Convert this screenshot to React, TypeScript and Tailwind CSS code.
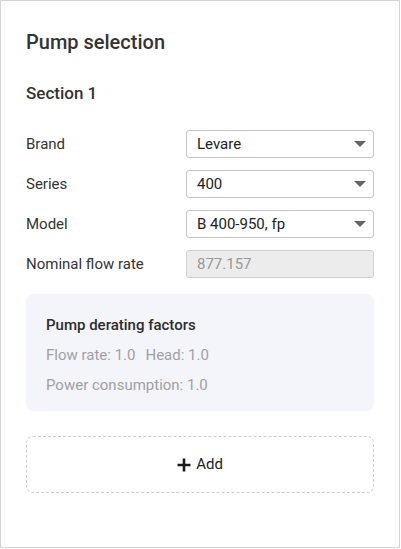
import React from 'react';

const fields = [
  { label: 'Brand', value: 'Levare', kind: 'select' },
  { label: 'Series', value: '400', kind: 'select' },
  { label: 'Model', value: 'B 400-950, fp', kind: 'select' },
  { label: 'Nominal flow rate', value: '877.157', kind: 'input' },
];

const Caret = () => (
  <svg width="12" height="7" viewBox="0 0 12 7" className="shrink-0">
    <path d="M0 0 H12 L6 6 Z" fill="#666" />
  </svg>
);

export default function App() {
  return (
    <div className="w-[400px] h-[548px] border border-[#d3d3d3] bg-white font-['Roboto',sans-serif] text-[#333]">
      <div className="px-[25px] pt-[28px]">
        <h1 className="text-[20px] leading-[27px] font-medium text-[#333]">Pump selection</h1>
        <h2 className="mt-[25px] text-[17px] leading-[24px] font-medium text-[#333]">Section 1</h2>

        <div className="mt-[25px] flex flex-col gap-[12px]">
          {fields.map((f) => (
            <div key={f.label} className="flex items-center h-[28px]">
              <div className="w-[160px] text-[15px] text-[#333]">{f.label}</div>
              {f.kind === 'select' ? (
                <div className="flex-1 h-[28px] flex items-center justify-between rounded-[3px] border border-[#c4c4c4] bg-white pl-[10px] pr-[7px] text-[15px] text-[#222]">
                  <span>{f.value}</span>
                  <Caret />
                </div>
              ) : (
                <div className="flex-1 h-[28px] flex items-center rounded-[3px] border border-[#cfcfcf] bg-[#ececec] px-[10px] text-[15px] text-[#999]">
                  {f.value}
                </div>
              )}
            </div>
          ))}
        </div>

        <div className="mt-[16px] h-[117px] rounded-[7px] bg-[#f4f5fa] px-[20px] pt-[21px]">
          <div className="text-[15px] leading-[20px] font-medium text-[#2c2c2c]">Pump derating factors</div>
          <div className="mt-[10px] text-[15px] leading-[20px] text-[#a0a0a4]">
            Flow rate: 1.0<span className="ml-[10px]">Head: 1.0</span>
          </div>
          <div className="mt-[10px] text-[15px] leading-[20px] text-[#a0a0a4]">Power consumption: 1.0</div>
        </div>

        <div className="mt-[25px] h-[57px] rounded-[7px] border border-dashed border-[#cccccc] flex items-center justify-center gap-[5px] text-[15px] text-[#222]">
          <svg width="14" height="14" viewBox="0 0 14 14">
            <path d="M7 0.5 V13.5 M0.5 7 H13.5" stroke="#1a1a1a" strokeWidth="2.6" />
          </svg>
          <span>Add</span>
        </div>
      </div>
    </div>
  );
}
